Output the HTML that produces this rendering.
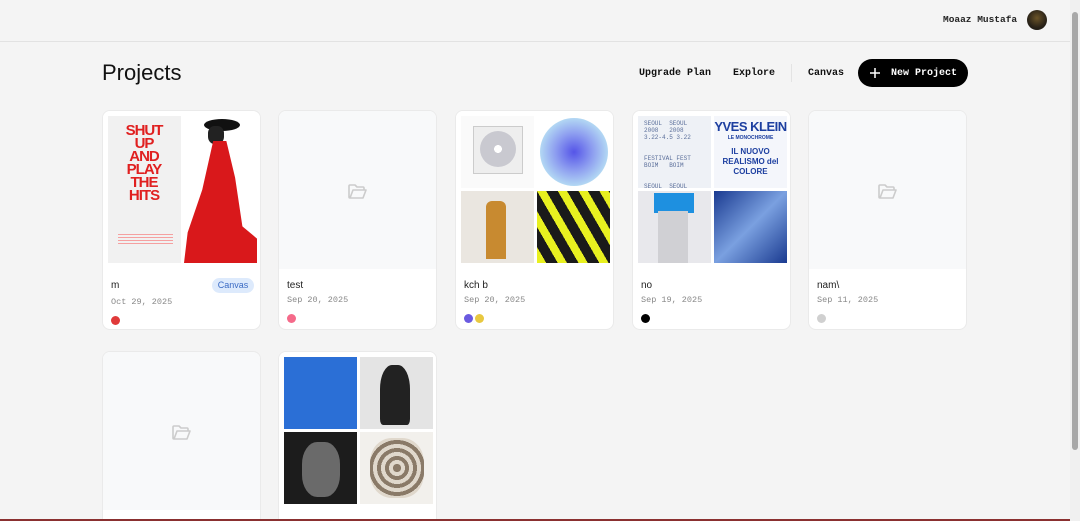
<!DOCTYPE html>
<html><head><meta charset="utf-8"><style>
*{box-sizing:border-box;margin:0;padding:0}
html,body{width:1080px;height:521px;overflow:hidden}
body{background:#f4f4f4;font-family:"Liberation Sans",sans-serif;position:relative}
.mono{font-family:"Liberation Mono",monospace}
.top{height:42px;border-bottom:1px solid #e2e2e2;position:relative}
.user{position:absolute;left:943px;top:14px;font-size:9.5px;font-weight:bold;color:#222}
.av{position:absolute;left:1027px;top:10px;width:20px;height:20px;border-radius:50%;background:radial-gradient(circle at 50% 40%,#6b5428 0,#2a2318 60%,#111 100%)}
h1{position:absolute;left:102px;top:60px;font-size:22px;font-weight:normal;color:#111}
.nav{position:absolute;top:68px;font-size:10px;font-weight:bold;color:#111}
.sep{position:absolute;left:791px;top:64px;width:1px;height:18px;background:#e3e3e3}
.btn{position:absolute;left:858px;top:59px;width:110px;height:28px;border-radius:14px;background:#000;color:#fff;font-size:10px;font-weight:bold;display:flex;align-items:center;padding-left:12px}
.card{position:absolute;width:159px;height:220px;background:#fff;border:1px solid #eaeaea;border-radius:8px;overflow:hidden}
.img{position:absolute;left:0;top:0;width:157px;height:158px;background:#f8f9fa}
.cell{position:absolute;overflow:hidden}
.name{position:absolute;left:8px;top:169px;font-size:10px;color:#222}
.date{position:absolute;left:8px;top:186px;font-size:8.5px;color:#888}
.dot{position:absolute;top:205px;width:9px;height:9px;border-radius:50%}
.folder{position:absolute;left:67px;top:68px}
</style></head><body>
<div class="top"><div class="user mono">Moaaz Mustafa</div><div class="av"></div></div>
<h1>Projects</h1>
<div class="nav mono" style="left:639px">Upgrade Plan</div>
<div class="nav mono" style="left:733px">Explore</div>
<div class="sep"></div>
<div class="nav mono" style="left:808px">Canvas</div>
<div class="btn mono"><svg width="10" height="10" style="flex:none"><path d="M5 0V10M0 5H10" stroke="#fff" stroke-width="1.5"/></svg><span style="margin-left:11px">New Project</span></div>

<svg width="0" height="0" style="position:absolute"><symbol id="f" viewBox="0 0 24 24"><path d="M3 7V18a1 1 0 0 0 1 1h13l3-8H7l-3 8M3 7a1 1 0 0 1 1-1h5l2 2h6a1 1 0 0 1 1 1v2" fill="none" stroke="#ccc" stroke-width="1.6" stroke-linejoin="round"/></symbol></svg>

<div class="card" style="left:102px;top:110px">
 <div class="img" style="background:#fff">
  <div class="cell" style="left:5px;top:5px;width:73px;height:147px;background:#f1f1f1">
   <div style="position:absolute;left:14px;top:8px;width:44px;color:#e02020;font-weight:bold;font-size:15px;line-height:13px;text-align:center;letter-spacing:-1px">SHUT UP AND PLAY THE HITS</div>
   <div style="position:absolute;left:10px;top:118px;width:55px;height:12px;background:repeating-linear-gradient(#f5a0a0 0 1px,transparent 1px 3px)"></div>
  </div>
  <div class="cell" style="left:81px;top:5px;width:73px;height:147px;background:#fff">
   <div style="position:absolute;left:20px;top:3px;width:36px;height:12px;border-radius:50%;background:#111"></div>
   <div style="position:absolute;left:24px;top:10px;width:16px;height:18px;background:#222;border-radius:40%"></div>
   <div style="position:absolute;left:0;top:25px;width:73px;height:122px;background:#d9181b;clip-path:polygon(40% 0,58% 0,70% 30%,80% 70%,100% 80%,100% 100%,0 100%,5% 75%,25% 40%)"></div>
  </div>
 </div>
 <div class="name">m</div>
 <div style="position:absolute;left:109px;top:167px;width:42px;height:15px;border-radius:8px;background:#ddeafc;color:#3b6bc4;font-size:9px;line-height:15px;text-align:center">Canvas</div>
 <div class="date mono" style="top:186px">Oct 29, 2025</div>
 <div class="dot" style="left:8px;background:#e03a3a"></div>
</div>

<div class="card" style="left:278px;top:110px">
 <div class="img"><svg class="folder" width="24" height="24"><use href="#f"/></svg></div>
 <div class="name">test</div><div class="date mono" style="top:184px">Sep 20, 2025</div>
 <div class="dot" style="left:8px;top:203px;background:#f56a8a"></div>
</div>

<div class="card" style="left:455px;top:110px">
 <div class="img" style="background:#fff">
  <div class="cell" style="left:5px;top:5px;width:73px;height:72px;background:#fafafa"><div style="position:absolute;left:12px;top:10px;width:50px;height:48px;background:#eee;border:1px solid #ccc"><div style="position:absolute;left:6px;top:4px;width:36px;height:36px;border-radius:50%;background:radial-gradient(circle,#fff 0 15%,#c9c9d0 16% 100%)"></div></div></div>
  <div class="cell" style="left:81px;top:5px;width:73px;height:72px;background:#fff"><div style="position:absolute;left:3px;top:2px;width:68px;height:68px;border-radius:50%;background:radial-gradient(circle,#5555e8 0,#8fa0f0 40%,#b8e0f4 75%,#c8c0f0 100%)"></div></div>
  <div class="cell" style="left:5px;top:80px;width:73px;height:72px;background:#eae6e0"><div style="position:absolute;left:25px;top:10px;width:20px;height:58px;background:#c88a30;border-radius:6px 6px 0 0"></div></div>
  <div class="cell" style="left:81px;top:80px;width:73px;height:72px;background:#1a1a1a"><div style="position:absolute;left:0;top:0;width:73px;height:72px;background:repeating-linear-gradient(60deg,#e8f020 0 8px,transparent 8px 18px)"></div></div>
 </div>
 <div class="name">kch b</div><div class="date mono" style="top:184px">Sep 20, 2025</div>
 <div class="dot" style="left:8px;top:203px;background:#6a5ae0"></div><div class="dot" style="left:19px;top:203px;background:#e8c840"></div>
</div>

<div class="card" style="left:632px;top:110px">
 <div class="img" style="background:#fff">
  <div class="cell mono" style="left:5px;top:5px;width:73px;height:72px;background:#eef1f6;font-size:6px;color:#5a6e9a;line-height:7px;padding:4px 6px">SEOUL&nbsp;&nbsp;SEOUL<br>2008&nbsp;&nbsp;&nbsp;2008<br>3.22-4.5 3.22<br><br><br>FESTIVAL FEST<br>BOIM&nbsp;&nbsp;&nbsp;BOIM<br><br><br>SEOUL&nbsp;&nbsp;SEOUL</div>
  <div class="cell" style="left:81px;top:5px;width:73px;height:72px;background:#f4f6fb;color:#1d3fa0;font-weight:bold;text-align:center"><div style="font-size:13px;line-height:16px;margin-top:3px;letter-spacing:-0.5px">YVES KLEIN</div><div style="font-size:5px">LE MONOCHROME</div><div style="font-size:8px;line-height:10px;margin-top:6px">IL NUOVO<br>REALISMO del COLORE</div></div>
  <div class="cell" style="left:5px;top:80px;width:73px;height:72px;background:#e8e8ec"><div style="position:absolute;left:16px;top:2px;width:40px;height:20px;background:#1e90e0"></div><div style="position:absolute;left:20px;top:20px;width:30px;height:52px;background:#d0d0d4"></div></div>
  <div class="cell" style="left:81px;top:80px;width:73px;height:72px;background:linear-gradient(135deg,#1a3a90,#7aa0e0 50%,#1a3a90)"></div>
 </div>
 <div class="name">no</div><div class="date mono" style="top:184px">Sep 19, 2025</div>
 <div class="dot" style="left:8px;top:203px;background:#000"></div>
</div>

<div class="card" style="left:808px;top:110px">
 <div class="img"><svg class="folder" width="24" height="24"><use href="#f"/></svg></div>
 <div class="name">nam\</div><div class="date mono" style="top:184px">Sep 11, 2025</div>
 <div class="dot" style="left:8px;top:203px;background:#d0d0d0"></div>
</div>

<div class="card" style="left:102px;top:351px;height:170px;border-bottom:none;border-radius:8px 8px 0 0">
 <div class="img"><svg class="folder" width="24" height="24"><use href="#f"/></svg></div>
</div>

<div class="card" style="left:278px;top:351px;height:170px;border-bottom:none;border-radius:8px 8px 0 0">
 <div class="img" style="background:#fff">
  <div class="cell" style="left:5px;top:5px;width:73px;height:72px;background:#2b6fd6"></div>
  <div class="cell" style="left:81px;top:5px;width:73px;height:72px;background:#e4e4e4"><div style="position:absolute;left:20px;top:8px;width:30px;height:60px;background:#222;border-radius:40% 40% 10% 10%"></div></div>
  <div class="cell" style="left:5px;top:80px;width:73px;height:72px;background:#1c1c1c"><div style="position:absolute;left:18px;top:10px;width:38px;height:55px;background:#6a6a6a;border-radius:40%"></div></div>
  <div class="cell" style="left:81px;top:80px;width:73px;height:72px;background:#f2f0ec"><div style="position:absolute;left:10px;top:6px;width:54px;height:60px;background:repeating-radial-gradient(circle,#8a7a68 0 4px,#e0d8cc 4px 8px);border-radius:40%"></div></div>
 </div>
</div>

<div style="position:absolute;left:1070px;top:0;width:10px;height:521px;background:#f0f0f0"></div>
<div style="position:absolute;left:1072px;top:12px;width:6px;height:438px;background:#a8a8a8;border-radius:3px"></div>
<div style="position:absolute;left:0;top:519px;width:1070px;height:2px;background:#8a3030"></div>
</body></html>
